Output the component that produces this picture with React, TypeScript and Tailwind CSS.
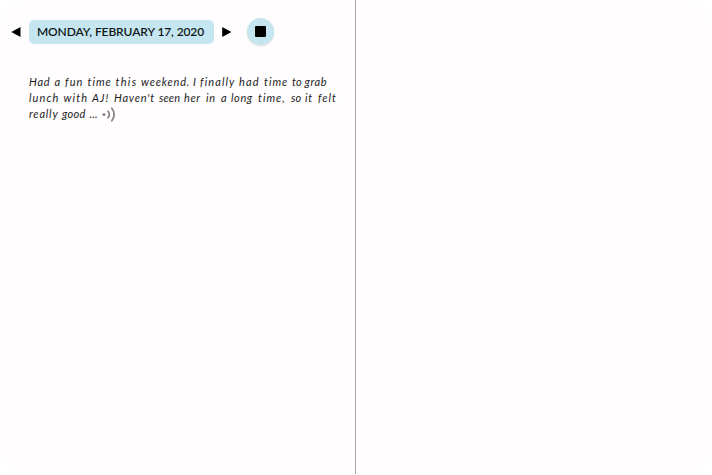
type Word = [text: string, advance: number, spacing: number];

const lines: Word[][] = [
  [["Had", 25.5, 0.8], ["a", 10.5, 0.5], ["fun", 22.5, 1.1], ["time", 28, 1], ["this", 25.5, 1.3], ["weekend.", 52, 0.8], ["I", 7, 0], ["finally", 39, 1.1], ["had", 25, 1.1], ["time", 28, 1], ["to", 12.5, 0.1], ["grab", 23.5, 0.6]],
  [["lunch", 34.5, 1.1], ["with", 28.5, 1.1], ["AJ!", 22, 1.1], ["Haven't", 45, 0.8], ["seen", 25, 0.1], ["her", 22, 0.6], ["in", 15, 0.8], ["a", 10, 0.3], ["long", 27, 0.6], ["time,", 33, 1], ["so", 14, 0.2], ["it", 13, 0.7], ["felt", 19, 1]],
  [["really", 33, 0.8], ["good", 27.5, 0.3], ["...", 9, 0.2]],
];

function Header() {
  return (
    <header className="flex h-7 items-center">
      <button aria-label="Previous day" className="ml-[11px]">
        <svg className="block h-[10px] w-[10px]" viewBox="0 0 10 10">
          <path d="M9.5 0V10L0.3 5Z" fill="#000" />
        </svg>
      </button>
      <div className="ml-2 flex h-6 w-[185px] items-center justify-center rounded-[5px] bg-[#c5e6f0] font-['Lato',sans-serif] text-[12px] font-semibold whitespace-nowrap text-[#101618]">
        <span className="mr-[2px] -tracking-[0.1px]">MONDAY, FEBRUARY 17, 2020</span>
      </div>
      <button aria-label="Next day" className="ml-2">
        <svg className="block h-[10px] w-[10px]" viewBox="0 0 10 10">
          <path d="M0.2 0V10L9.4 5Z" fill="#000" />
        </svg>
      </button>
      <button
        aria-label="Stop"
        className="mb-[2px] ml-[14.5px] flex size-[27px] items-center justify-center rounded-full bg-[#c5e6f0] shadow-[0_1px_2px_rgba(0,0,0,0.15)]"
      >
        <span className="block size-[11px] rounded-[1px] bg-black" />
      </button>
    </header>
  );
}

export default function App() {
  return (
    <div className="h-[475px] w-[712px] overflow-hidden bg-white">
      <main className="flex h-[474px] rounded-[24px] bg-[#fffdfe]">
        <section className="w-[356px] border-r border-[#a5a3a4] pt-[18px]">
          <Header />
          <div className="mt-7 ml-[29px] font-['Lato',sans-serif] text-[11px] leading-4 text-[#1c1c1c] italic">
            {lines.map((words, i) => (
              <p key={i} className="flex h-4 items-center whitespace-pre">
                {words.map(([text, advance, spacing], j) => (
                  <span key={j} className="shrink-0" style={{ width: advance, letterSpacing: spacing }}>
                    {j < words.length - 1 ? text + " " : text}
                  </span>
                ))}
                {i === 2 && (
                  <svg className="ml-[3px] h-[15px] w-[14px]" viewBox="0 0 14 15" fill="none" stroke="#858384" strokeLinecap="round">
                    <circle cx="2" cy="7.5" r="1.5" fill="#858384" stroke="none" />
                    <path d="M6 4.2Q8.7 7.4 6 10.8M9.8 1.2Q14.5 7.4 9.8 13.8" strokeWidth="1.7" />
                  </svg>
                )}
              </p>
            ))}
          </div>
        </section>
        <section className="flex-1" />
      </main>
    </div>
  );
}
